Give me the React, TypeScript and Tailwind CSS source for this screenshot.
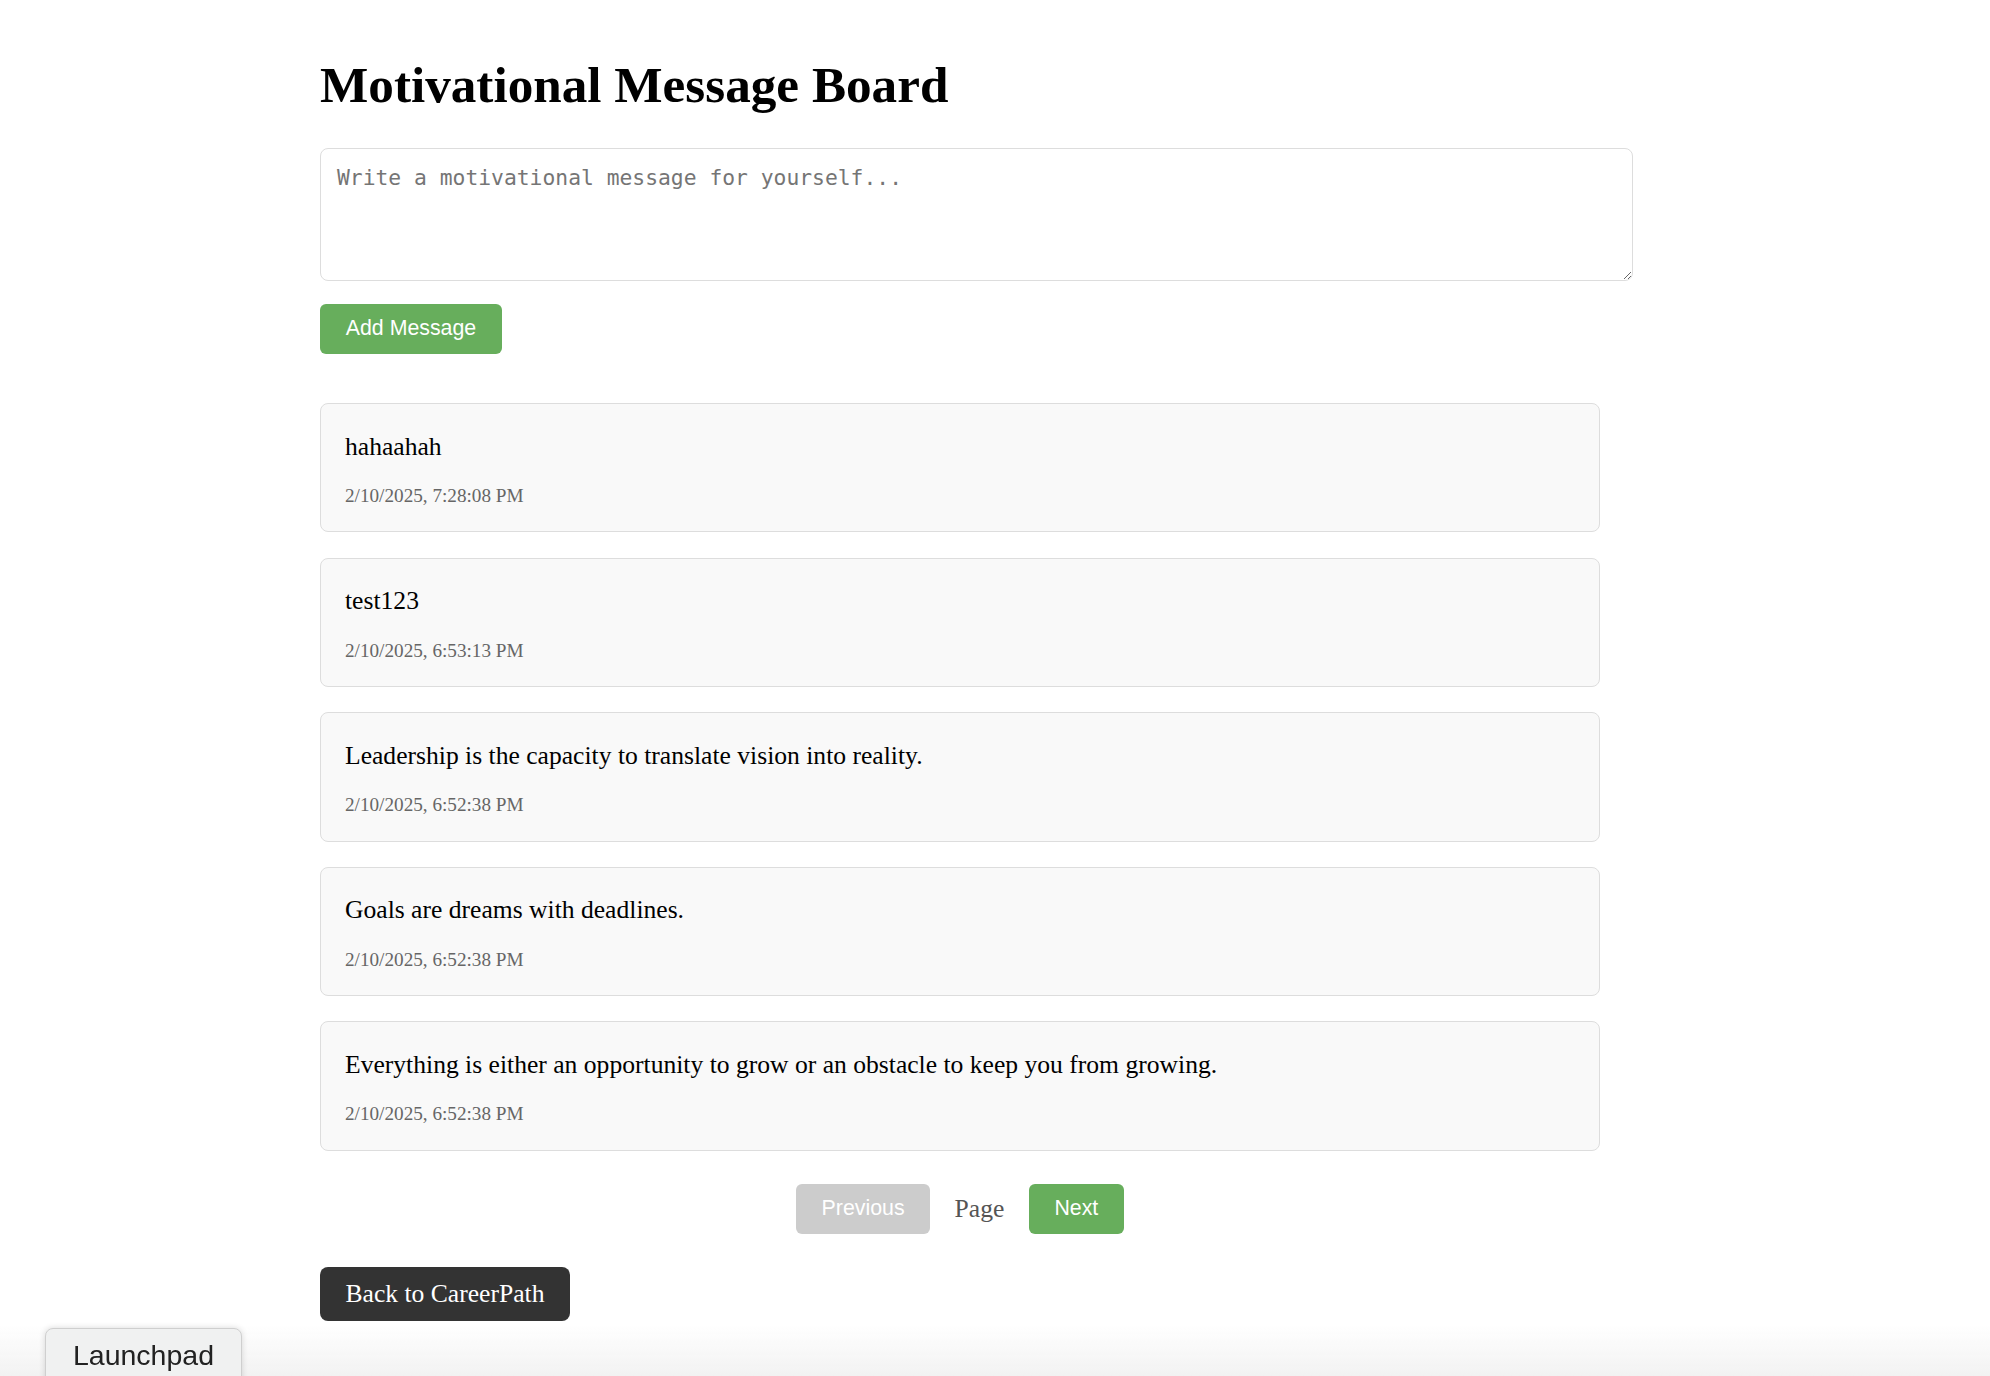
import React from "react";

const messages = [
  { text: "hahaahah", date: "2/10/2025, 7:28:08 PM" },
  { text: "test123", date: "2/10/2025, 6:53:13 PM" },
  { text: "Leadership is the capacity to translate vision into reality.", date: "2/10/2025, 6:52:38 PM" },
  { text: "Goals are dreams with deadlines.", date: "2/10/2025, 6:52:38 PM" },
  {
    text: "Everything is either an opportunity to grow or an obstacle to keep you from growing.",
    date: "2/10/2025, 6:52:38 PM",
  },
];

export default function App() {
  return (
    <div className="min-h-[1376px] bg-white text-black [font-family:'Liberation_Serif',serif]">
      <div className="pl-[320px] pt-[55px] pb-[60px]">
        <div className="w-[1280px]">
          <h1 className="m-0 text-[51.2px] leading-[59px] font-bold [font-family:'Liberation_Serif',serif]">
            Motivational Message Board
          </h1>
          <textarea
            className="mt-[34px] block w-[1313px] h-[133px] rounded-[8px] border border-[#dddddd] bg-white p-[16px] text-[21.33px] leading-[25px] [font-family:'DejaVu_Sans_Mono',monospace] placeholder:text-[#757575] outline-none"
            placeholder="Write a motivational message for yourself..."
          />
          <button className="mt-[23px] flex h-[50px] w-[182px] items-center justify-center rounded-[6px] bg-[#67ae5c] text-[21.33px] text-white [font-family:'Liberation_Sans',Arial,sans-serif]">
            Add Message
          </button>
          <div className="mt-[49px] flex flex-col gap-[25.2px]">
            {messages.map((m, i) => (
              <div
                key={i}
                className="rounded-[8px] border border-[#dddddd] bg-[#f9f9f9] px-[24px] pt-[27.5px] pb-[24.4px]"
              >
                <p className="m-0 text-[25.6px] leading-[30px] text-black">{m.text}</p>
                <p className="mt-[23.5px] text-[19.2px] leading-[22px] text-[#666666]">{m.date}</p>
              </div>
            ))}
          </div>
          <div className="mt-[33px] flex items-center justify-center">
            <button className="flex h-[50px] w-[134px] items-center justify-center rounded-[6px] bg-[#cccccc] text-[21.33px] text-white [font-family:'Liberation_Sans',Arial,sans-serif]">
              Previous
            </button>
            <span className="mx-[24.5px] text-[25.6px] leading-[30px] text-[#555555]">Page</span>
            <button className="flex h-[50px] w-[95px] items-center justify-center rounded-[6px] bg-[#67ae5c] text-[21.33px] text-white [font-family:'Liberation_Sans',Arial,sans-serif]">
              Next
            </button>
          </div>
          <a className="mt-[33px] flex h-[54px] w-[250px] items-center justify-center rounded-[8px] bg-[#333333] text-[25.6px] text-white">
            Back to CareerPath
          </a>
        </div>
      </div>

      <div className="pointer-events-none fixed bottom-0 left-0 right-0 h-[52px] bg-gradient-to-b from-[rgba(255,255,255,0)] to-[#f2f2f2]" />
      <div className="fixed bottom-[-6px] left-[45px] flex h-[54px] w-[197px] items-start justify-center rounded-t-[8px] border border-[#cfcfcf] bg-[#f0f1f1] pt-[9px] shadow-[0_0_6px_rgba(0,0,0,0.15)]">
        <span className="text-[28.5px] leading-[34px] text-[#222222] [font-family:'Liberation_Sans',Helvetica,sans-serif]">
          Launchpad
        </span>
      </div>
    </div>
  );
}
